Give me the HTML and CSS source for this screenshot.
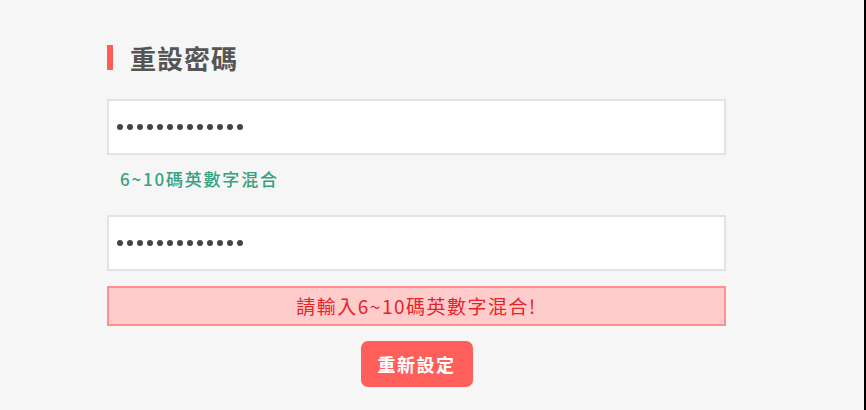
FILE: index.html
```html
<!DOCTYPE html>
<html lang="zh-Hant">
<head>
<meta charset="utf-8">
<title>重設密碼</title>
<link rel="stylesheet" href="styles.css">
</head>
<body>
<div class="page">
  <main class="panel">
    <h1 class="title"><span class="title-bar"></span><span class="title-text">重設密碼</span></h1>
    <div class="field">
      <div class="dots"><span></span><span></span><span></span><span></span><span></span><span></span><span></span><span></span><span></span><span></span><span></span><span></span><span></span></div>
    </div>
    <p class="hint">6~10碼英數字混合</p>
    <div class="field">
      <div class="dots"><span></span><span></span><span></span><span></span><span></span><span></span><span></span><span></span><span></span><span></span><span></span><span></span><span></span></div>
    </div>
    <div class="error">請輸入6~10碼英數字混合!</div>
    <div class="actions"><button class="btn">重新設定</button></div>
  </main>
</div>
</body>
</html>
```

FILE: styles.css
```css
html, body {
  margin: 0;
  padding: 0;
}
body {
  background: #f6f6f6;
  font-family: "Noto Sans CJK TC", "Noto Sans", sans-serif;
}
.page {
  box-sizing: border-box;
  width: 866px;
  height: 410px;
  border-right: 2px solid #000;
  padding: 43px 0 0 107px;
}
.panel {
  width: 619px;
  display: flex;
  flex-direction: column;
}
.title {
  margin: 0;
  height: 29px;
  display: flex;
  align-items: center;
  font-size: 26px;
  line-height: 29px;
  font-weight: 700;
  color: #555;
  letter-spacing: 1px;
}
.title-bar {
  width: 6px;
  height: 25px;
  background: #ff5b57;
  margin-right: 17px;
}
.field {
  margin-top: 27px;
  box-sizing: border-box;
  height: 56px;
  background: #fff;
  border: 2px solid #e3e3e3;
  display: flex;
  align-items: center;
  padding-left: 8px;
}
.hint + .field {
  margin-top: 26px;
}
.dots {
  display: flex;
  gap: 4px;
}
.dots span {
  width: 6px;
  height: 6px;
  border-radius: 50%;
  background: #454545;
}
.hint {
  margin: 14px 0 0 13px;
  font-size: 17px;
  line-height: 20px;
  font-weight: 500;
  color: #36a07f;
  letter-spacing: 1.8px;
}
.error {
  margin-top: 15px;
  box-sizing: border-box;
  height: 40px;
  background: #ffcccc;
  border: 2px solid #ff8e8e;
  color: #e5232a;
  font-size: 19px;
  line-height: 36px;
  text-align: center;
  letter-spacing: 1.5px;
}
.actions {
  margin-top: 15px;
  display: flex;
  justify-content: center;
}
.btn {
  width: 112px;
  height: 46px;
  border: 0;
  border-radius: 7px;
  background: #ff5f5a;
  color: #fff;
  font-family: "Noto Sans CJK TC", "Noto Sans", sans-serif;
  font-size: 18px;
  font-weight: 700;
  letter-spacing: 1.5px;
  padding: 0;
}
```
